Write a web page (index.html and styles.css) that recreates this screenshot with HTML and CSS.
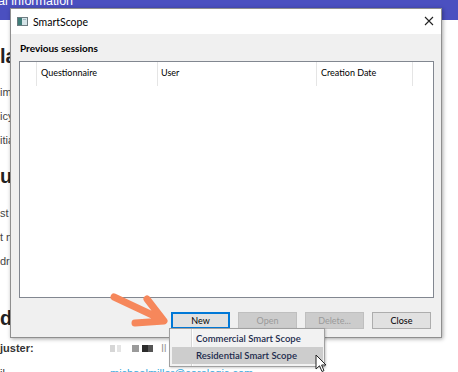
FILE: index.html
```html
<!DOCTYPE html>
<html lang="en">
<head>
    <meta charset="UTF-8">
    <meta name="viewport" content="width=device-width, initial-scale=1.0">
    <title>SmartScope - Previous sessions</title>
    <link rel="stylesheet" href="styles.css">
</head>
<body>

    <header class="app-bar">
        <h1 class="app-title">al information</h1>
    </header>

    <main class="page">
        <h2 class="sec-head">laim</h2>
        <div class="field">im number</div>
        <div class="field">icy</div>
        <div class="field">itial</div>

        <h2 class="sec-head sec-gap">us</h2>
        <div class="field field-gap">st name</div>
        <div class="field">t name</div>
        <div class="field">dress</div>

        <h2 class="sec-head sec-gap-lg">dj</h2>
        <div class="row">
            <span class="row-label">juster:</span>
            <span class="row-value">
                <i class="px px-a"></i><i class="px px-b"></i><i class="px px-c"></i><i class="px px-d"></i><i class="px px-e"></i>
                <span class="px-text">Il</span>
            </span>
        </div>
        <div class="row row-low">
            <span class="row-label row-label-light">il</span>
            <a class="row-link" href="#">michaelmiller@corelogic.com</a>
        </div>
    </main>

    <div class="dialog">
        <div class="titlebar">
            <svg class="app-icon" width="11" height="9" viewBox="0 0 11 9">
                <rect x="0.5" y="0.5" width="10" height="8" fill="#d5e4e8" stroke="#6d7c82"/>
                <rect x="1" y="1" width="4" height="7" fill="#3f7d78"/>
                <rect x="6" y="2" width="3" height="1" fill="#9fb8be"/>
            </svg>
            <span class="title-text">SmartScope</span>
            <svg class="close-x" width="10" height="10" viewBox="0 0 10 10">
                <path d="M1 1 L9 9 M9 1 L1 9" stroke="#222" stroke-width="1.1"/>
            </svg>
        </div>

        <div class="dialog-body">
            <div class="caption">Previous sessions</div>

            <div class="listview">
                <div class="list-head">
                    <span class="col col-icon"></span>
                    <span class="col col-quest">Questionnaire</span>
                    <span class="col col-user">User</span>
                    <span class="col col-date">Creation Date</span>
                </div>
            </div>

            <div class="buttons">
                <button class="btn btn-focus">New</button>
                <button class="btn" disabled>Open</button>
                <button class="btn" disabled>Delete...</button>
                <button class="btn">Close</button>
            </div>
        </div>
    </div>

    <div class="menu">
        <div class="menu-item">Commercial Smart Scope</div>
        <div class="menu-item menu-item-hover">Residential Smart Scope</div>
    </div>

    <!-- hint arrow drawn over the page -->
    <svg class="hint-arrow" width="80" height="45" viewBox="0 0 80 45">
        <path d="M14 12 L63 35 M47 14 L64 36 L35 38" fill="none" stroke="#f6875b" stroke-width="7" stroke-linecap="round" stroke-linejoin="round"/>
    </svg>

    <svg class="cursor" width="13" height="20" viewBox="0 0 13 20">
        <path d="M1 1 L1 15 L4.5 11.8 L7 17.5 L9 16.6 L6.6 11 L11 11 Z" fill="#fff" stroke="#222" stroke-width="1" stroke-linejoin="round"/>
    </svg>

</body>
</html>
```

FILE: styles.css
```css
* {
    box-sizing: border-box;
}

body {
    margin: 0;
    width: 458px;
    height: 372px;
    overflow: hidden;
    position: relative;
    background-color: #fff;
    font-family: "Liberation Sans", Arial, sans-serif;
}

/* page behind the dialog */

.app-bar {
    height: 20px;
    background-color: #4b50c0;
    overflow: hidden;
}

.app-title {
    margin: -5px 0 0 -2px;
    font-size: 12.5px;
    line-height: 13px;
    font-weight: normal;
    color: #fff;
    white-space: nowrap;
}

.page {
    color: #444;
}

.sec-head {
    width: 10px;
    overflow: hidden;
    margin: 24px 0 12px;
    height: 24px;
    line-height: 24px;
    font-size: 20px;
    font-weight: bold;
    color: #222;
    white-space: nowrap;
}

.sec-gap {
    margin-top: 12px;
    margin-bottom: 13px;
}

.sec-gap-lg {
    margin-top: 33px;
    margin-bottom: 7px;
}

.field {
    width: 10px;
    overflow: hidden;
    height: 24px;
    line-height: 24px;
    font-size: 11px;
    white-space: nowrap;
}

.row {
    display: grid;
    grid-template-columns: 110px auto;
    height: 22px;
    line-height: 22px;
    font-size: 11px;
    white-space: nowrap;
}

.row-low {
    margin-top: 3px;
}

.row-label {
    font-weight: bold;
    color: #333;
}

.row-label-light {
    font-weight: normal;
}

.row-value {
    display: flex;
    align-items: center;
}

.px {
    display: inline-block;
    height: 7px;
}

.px-a { width: 5px; background-color: #d6d6d6; margin-right: 2px; }
.px-b { width: 4px; background-color: #e4e4e4; margin-right: 11px; }
.px-c { width: 7px; background-color: #9a9a9a; margin-right: 3px; }
.px-d { width: 6px; background-color: #2b2b2b; }
.px-e { width: 5px; background-color: #555; margin-right: 8px; }

.px-text {
    color: #999;
}

.row-link {
    color: #3aa9dc;
    text-decoration: none;
}

/* SmartScope dialog */

.dialog {
    position: absolute;
    left: 10px;
    top: 8px;
    width: 432px;
    height: 330px;
    display: flex;
    flex-direction: column;
    border: 1px solid #8f8f8f;
    background-color: #f0f0f0;
    box-shadow: 1px 1px 4px rgba(0, 0, 0, 0.35);
    font-family: Lato, "Noto Sans", sans-serif;
    color: #000;
}

.titlebar {
    height: 25px;
    display: flex;
    align-items: center;
    padding-left: 6px;
    padding-right: 7px;
    background-color: #fff;
}

.app-icon {
    margin-right: 5px;
}

.title-text {
    flex: 1;
    font-size: 10.5px;
}

.close-x {
    margin-top: -1px;
}

.dialog-body {
    flex: 1;
    padding: 0 7px 8px 8px;
}

.caption {
    height: 27px;
    padding-top: 1px;
    display: flex;
    align-items: center;
    padding-left: 1px;
    font-size: 10px;
    font-weight: bold;
}

.listview {
    height: 237px;
    border: 1px solid #828790;
    background-color: #fff;
}

.list-head {
    display: flex;
    height: 24px;
    font-size: 9px;
}

.col {
    padding: 5px 0 0 4px;
    border-right: 1px solid #e5e5e5;
    white-space: nowrap;
}

.col-icon { width: 17px; }
.col-quest { width: 121px; }
.col-user { width: 159px; padding-left: 3px; }
.col-date { width: 96px; }

.buttons {
    display: flex;
    justify-content: flex-end;
    gap: 8px;
    margin-top: 14px;
    padding-right: 3px;
}

.btn {
    width: 59px;
    height: 17px;
    padding: 0;
    border: 1px solid #adadad;
    background-color: #e1e1e1;
    font-family: Lato, "Noto Sans", sans-serif;
    font-size: 9px;
    color: #000;
}

.btn:disabled {
    border-color: #bfbfbf;
    background-color: #cccccc;
    color: #9a9a9a;
}

.btn-focus {
    border-color: #0078d7;
    box-shadow: inset 0 0 0 1px #0078d7;
}

/* drop-down under the New button */

.menu {
    position: absolute;
    left: 169px;
    top: 328px;
    width: 156px;
    padding: 1px 1px 2px;
    border: 1px solid #a0a0a0;
    background: linear-gradient(to right, transparent 21px, #d5d5d5 21px, #d5d5d5 22px, #fff 22px, #fff 23px, transparent 23px), #f2f2f2;
    box-shadow: 1px 1px 2px rgba(0, 0, 0, 0.2);
    font-family: Lato, "Noto Sans", sans-serif;
    font-size: 9.5px;
    font-weight: 600;
    color: #1c2a4c;
}

.menu-item {
    height: 17px;
    line-height: 17px;
    padding-left: 25px;
    white-space: nowrap;
}

.menu-item-hover {
    margin-left: 1px;
    padding-left: 24px;
    background-color: #cdcdcd;
}

.hint-arrow {
    position: absolute;
    left: 100px;
    top: 285px;
}

.cursor {
    position: absolute;
    left: 315px;
    top: 354px;
}
```
